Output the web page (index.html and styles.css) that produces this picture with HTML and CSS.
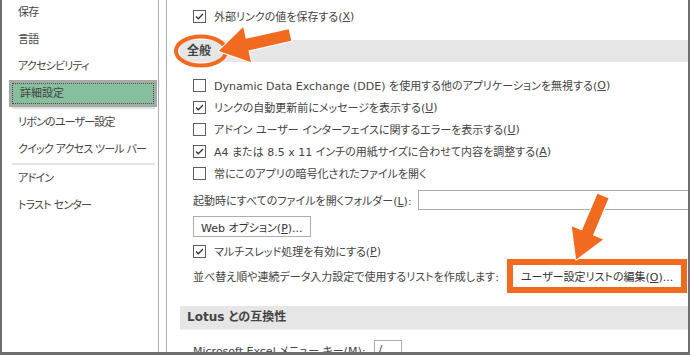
FILE: index.html
```html
<!DOCTYPE html>
<html lang="ja">
<head>
  <meta charset="UTF-8" />
  <meta name="viewport" content="width=device-width, initial-scale=1" />
  <title>Excel のオプション | 詳細設定</title>
  <link rel="stylesheet" href="styles.css">
</head>
<body>
  <div class="window">
    <nav class="nav" aria-label="オプションの分類">
      <ul>
        <li>保存</li>
        <li>言語</li>
        <li>アクセシビリティ</li>
        <li class="active">詳細設定</li>
        <li class="sep" role="separator"></li>
        <li>リボンのユーザー設定</li>
        <li>クイック アクセス ツール バー</li>
        <li class="sep" role="separator"></li>
        <li>アドイン</li>
        <li>トラスト センター</li>
      </ul>
    </nav>

    <main class="panel">
      <label class="opt first"><span class="cb on"><svg viewBox="0 0 11 11"><path d="M2 5.5 L4.3 7.8 L9 3"/></svg></span>外部リンクの値を保存する(<u>X</u>)</label>

      <h2 class="band">全般</h2>

      <label class="opt gap-top"><span class="cb"></span>Dynamic Data Exchange (DDE) を使用する他のアプリケーションを無視する(<u>O</u>)</label>
      <label class="opt"><span class="cb on"><svg viewBox="0 0 11 11"><path d="M2 5.5 L4.3 7.8 L9 3"/></svg></span>リンクの自動更新前にメッセージを表示する(<u>U</u>)</label>
      <label class="opt"><span class="cb"></span>アドイン ユーザー インターフェイスに関するエラーを表示する(<u>U</u>)</label>
      <label class="opt"><span class="cb on"><svg viewBox="0 0 11 11"><path d="M2 5.5 L4.3 7.8 L9 3"/></svg></span>A4 または 8.5 x 11 インチの用紙サイズに合わせて内容を調整する(<u>A</u>)</label>
      <label class="opt"><span class="cb"></span>常にこのアプリの暗号化されたファイルを開く</label>

      <div class="field">
        <span>起動時にすべてのファイルを開くフォルダー(<u>L</u>):</span>
        <span class="input wide"></span>
      </div>

      <div class="btn-row">
        <button class="btn">Web オプション(<u>P</u>)...</button>
      </div>

      <label class="opt multi"><span class="cb on"><svg viewBox="0 0 11 11"><path d="M2 5.5 L4.3 7.8 L9 3"/></svg></span>マルチスレッド処理を有効にする(<u>P</u>)</label>

      <div class="field list-row">
        <span>並べ替え順や連続データ入力設定で使用するリストを作成します:</span>
        <button class="btn marked">ユーザー設定リストの編集(<u>O</u>)...</button>
      </div>

      <h2 class="band lotus">Lotus との互換性</h2>

      <div class="field menu-key">
        <span>Microsoft Excel メニュー キー(<u>M</u>):</span>
        <span class="input small">/</span>
      </div>
    </main>

    <!-- 注釈 -->
    <svg class="marks" width="690" height="355" viewBox="0 0 690 355" aria-hidden="true">
      <ellipse cx="201" cy="51" rx="25" ry="14.5" fill="none" stroke="#f26a1f" stroke-width="4"/>
      <g transform="translate(290 35) rotate(167.3)">
        <polygon points="0,-6 44,-6 44,-18 73,0 44,18 44,6 0,6" fill="#f26a1f" stroke="#fff" stroke-width="2" stroke-linejoin="round" paint-order="stroke"/>
      </g>
      <g transform="translate(603 196) rotate(112.9)">
        <polygon points="0,-6 40,-6 40,-17 69,0 40,17 40,6 0,6" fill="#f26a1f" stroke="#fff" stroke-width="2" stroke-linejoin="round" paint-order="stroke"/>
      </g>
    </svg>
  </div>
</body>
</html>
```

FILE: styles.css
```css
body {
  margin: 0;
  background: #fff;
  font-family: "DejaVu Sans", "Noto Sans CJK JP", sans-serif;
  font-size: 11px;
  color: #444;
  font-feature-settings: "palt";
}
.window {
  position: relative;
  width: 690px;
  height: 355px;
  box-sizing: border-box;
  border: 0 solid #6e6e6e;
  border-width: 0 2px 3px 2px;
  display: flex;
  overflow: hidden;
  background: #fff;
}
/* 左のメニュー */
.nav {
  width: 156px;
  flex-shrink: 0;
  border-right: 1px solid #ababab;
  font-size: 11px;
  letter-spacing: -0.8px;
}
.nav ul {
  list-style: none;
  margin: -1px 0 0 0;
  padding: 0;
}
.nav li {
  height: 27px;
  line-height: 27px;
  padding-left: 16px;
  white-space: nowrap;
}
.nav li.active {
  box-sizing: border-box;
  margin: 0 1px 0 7px;
  padding-left: 9px;
  background: #86bf9e;
  border: 2px solid #a8a8a8;
  line-height: 23px;
  letter-spacing: 0;
  outline: 1px dotted #8a2a50;
  outline-offset: -4px;
}
.nav li.sep {
  height: 2px;
  margin: 0 3px 0 10px;
  padding: 0;
  background: #e2e2e2;
}
/* 右のパネル */
.panel {
  flex: 1;
  margin-left: 7px;
  border-left: 1px solid #ababab;
  padding-top: 5px;
  min-width: 0;
}
.opt {
  display: flex;
  align-items: center;
  height: 22px;
  padding-left: 26px;
  white-space: nowrap;
}
.opt.gap-top {
  margin-top: 12px;
}
.opt.multi {
  margin-top: 3px;
}
.cb {
  box-sizing: border-box;
  width: 13px;
  height: 13px;
  border: 1px solid #5e5e5e;
  background: #fff;
  margin-right: 8px;
  flex-shrink: 0;
  display: flex;
}
.cb svg {
  width: 11px;
  height: 11px;
}
.cb svg path {
  fill: none;
  stroke: #333;
  stroke-width: 1.3;
}
u {
  text-decoration: underline;
  text-underline-offset: 1px;
}
.band {
  margin: 13px 0 0 13px;
  height: 22px;
  line-height: 22px;
  padding-left: 7px;
  background: #e6e6e6;
  font-size: 12px;
  font-weight: bold;
  color: #444;
}
.band.lotus {
  margin-top: 18px;
  height: 23px;
  line-height: 23px;
  border-bottom: 1px solid #efefef;
}
.field {
  display: flex;
  align-items: center;
  padding-left: 26px;
  margin-top: 4px;
  height: 24px;
  white-space: nowrap;
}
.input {
  box-sizing: border-box;
  height: 20px;
  border: 1px solid #ababab;
  background: #fff;
  margin-left: 6px;
}
.input.wide {
  flex: 1;
  margin-right: -4px;
}
.input.small {
  width: 28px;
  margin-left: 8px;
  padding-left: 4px;
  line-height: 18px;
}
.btn-row {
  padding-left: 26px;
  margin-top: 4px;
  height: 21px;
}
.btn {
  box-sizing: border-box;
  height: 21px;
  padding: 0 7px;
  border: 1px solid #adadad;
  background: #fdfdfd;
  font: inherit;
  color: #333;
  white-space: nowrap;
}
.list-row {
  margin-top: 2px;
}
.btn.marked {
  height: 24px;
  margin-left: 13px;
  padding: 0 8px;
  border-color: #f26a1f;
  background: #fff;
  box-shadow: 0 0 0 5px #f26a1f;
}
.menu-key {
  margin-top: 8px;
}
/* 注釈レイヤー */
.marks {
  position: absolute;
  left: -2px;
  top: 0;
  pointer-events: none;
}
```
